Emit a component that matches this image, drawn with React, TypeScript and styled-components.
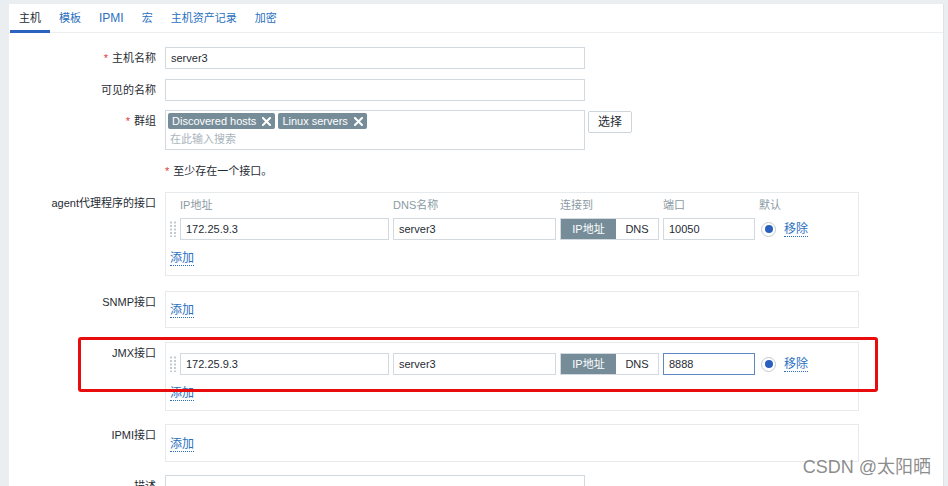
import React from 'react';
import styled, { createGlobalStyle } from 'styled-components';

const FONT = `"Liberation Sans", Arial, "Noto Sans CJK SC", sans-serif`;
const LINK = '#2a70bf';
const BORDER = '#d3dadf';

const GlobalStyle = createGlobalStyle`
  html, body { margin: 0; padding: 0; overflow: hidden; background: #ebeef0; }
  body { font-family: ${FONT}; font-size: 11px; color: #1f2c33; }
  * { box-sizing: border-box; }
`;

const Page = styled.div`
  padding: 4px 4px 0 9px;
  height: 486px;
`;

const Panel = styled.div`
  position: relative;
  background: #fff;
  height: 482px;
  overflow: hidden;
  border-right: 1px solid #dfe3e6;
`;

const TabBar = styled.nav`
  display: flex;
  height: 29px;
  padding-left: 1px;
  box-shadow: inset 0 -1px 0 #eceff1;
`;

const Tab = styled.div<{ $active?: boolean }>`
  padding: 0 9px;
  line-height: 28px;
  height: 29px;
  font-size: 11px;
  color: ${(p) => (p.$active ? '#1f2c33' : LINK)};
  box-shadow: ${(p) => (p.$active ? 'inset 0 -3px 0 #2d62bf' : 'none')};
  white-space: nowrap;
`;

const TabLatin = styled.span`
  font-size: 12px;
`;

const Form = styled.div`
  padding-top: 14px;
  display: flex;
  flex-direction: column;
`;

const Row = styled.div<{ $gap?: number }>`
  display: grid;
  grid-template-columns: 147px auto;
  column-gap: 9px;
  align-items: start;
  margin-bottom: ${(p) => p.$gap ?? 10}px;
`;

const Label = styled.div`
  text-align: right;
  line-height: 22px;
  white-space: nowrap;
`;

const Star = styled.span`
  color: #e03c3c;
  margin-right: 4px;
`;

const Field = styled.div`
  display: flex;
  align-items: flex-start;
  gap: 3px;
`;

const TextInput = styled.div<{ $w?: number; $focus?: boolean }>`
  width: ${(p) => p.$w ?? 420}px;
  height: 22px;
  border: 1px solid ${(p) => (p.$focus ? '#5c89bf' : BORDER)};
  padding: 0 5px;
  line-height: 20px;
  color: #1f2c33;
  background: #fff;
  white-space: nowrap;
  overflow: hidden;
`;

const TextArea = styled.div`
  width: 420px;
  height: 60px;
  border: 1px solid ${BORDER};
`;

const MultiSelect = styled.div`
  width: 420px;
  height: 40px;
  border: 1px solid ${BORDER};
  padding: 2px 2px;
  display: flex;
  flex-direction: column;
`;

const Chips = styled.div`
  display: flex;
  gap: 3px;
`;

const Chip = styled.span`
  display: inline-flex;
  align-items: center;
  gap: 6px;
  height: 16px;
  padding: 0 4px 0 4px;
  background: #768d99;
  color: #fff;
  border-radius: 2px;
  white-space: nowrap;
`;

const Placeholder = styled.div`
  padding-left: 2px;
  margin-top: 1px;
  line-height: 18px;
  color: #a9b5bc;
`;

const Button = styled.div`
  width: 44px;
  height: 22px;
  margin-top: 1px;
  border: 1px solid #cdd5da;
  border-radius: 2px;
  text-align: center;
  line-height: 20px;
  font-size: 12px;
  color: #1f2c33;
  background: #fff;
`;

const Hint = styled.div`
  line-height: 22px;
`;

const IfaceBox = styled.div<{ $pt?: number }>`
  width: 694px;
  border: 1px solid #e6eaec;
  padding: ${(p) => p.$pt ?? 5}px 4px 9px 4px;
`;

const IfaceGrid = styled.div`
  display: grid;
  grid-template-columns: 6px 209px 163px 99px 92px auto;
  column-gap: 4px;
  row-gap: 6px;
  align-items: center;
`;

const Head = styled.div`
  color: #8b9aa3;
  line-height: 14px;
`;

const Toggle = styled.div`
  display: flex;
  height: 22px;
  border: 1px solid ${BORDER};
`;

const ToggleOpt = styled.div<{ $on?: boolean; $w: number }>`
  width: ${(p) => p.$w}px;
  text-align: center;
  line-height: 20px;
  background: ${(p) => (p.$on ? '#768d99' : '#fff')};
  color: ${(p) => (p.$on ? '#fff' : '#1f2c33')};
`;

const DefaultCell = styled.div`
  display: flex;
  align-items: center;
  gap: 8px;
  padding-left: 2px;
`;

const Radio = styled.span`
  width: 15px;
  height: 15px;
  border-radius: 50%;
  border: 1px solid #c2cbd1;
  display: inline-flex;
  align-items: center;
  justify-content: center;
  &::after {
    content: '';
    width: 8px;
    height: 8px;
    border-radius: 50%;
    background: #2a5fbe;
  }
`;

const Link = styled.span`
  color: ${LINK};
  font-size: 12px;
  line-height: 14px;
  border-bottom: 1px dotted ${LINK};
  white-space: nowrap;
`;

const AddRow = styled.div<{ $mt?: number }>`
  margin-top: ${(p) => p.$mt ?? 0}px;
  display: flex;
`;

const Highlight = styled.div`
  position: absolute;
  left: 69px;
  top: 333px;
  width: 800px;
  height: 55px;
  border: 3px solid #e80c0c;
  border-radius: 3px;
  pointer-events: none;
`;

const Watermark = styled.div`
  position: absolute;
  right: 12px;
  bottom: 8px;
  font-family: ${FONT};
  font-size: 18px;
  line-height: 22px;
  color: rgba(110, 110, 110, 0.8);
  white-space: nowrap;
`;

const CloseIcon = () => (
  <svg width="9" height="9" viewBox="0 0 9 9">
    <path d="M1 1 L8 8 M8 1 L1 8" stroke="#fff" strokeWidth="2" strokeLinecap="square" />
  </svg>
);

const Handle = () => (
  <svg width="6" height="16" viewBox="0 0 6 16">
    {[0, 1, 2, 3, 4].map((r) =>
      [0, 1].map((c) => (
        <rect key={`${r}-${c}`} x={c * 4} y={r * 3.5 + 0.5} width="2" height="2" fill="#c3cbd1" />
      ))
    )}
  </svg>
);

type Iface = { ip: string; dns: string; port: string; focus?: boolean };

const IfaceRow: React.FC<Iface> = ({ ip, dns, port, focus }) => (
  <>
    <Handle />
    <TextInput $w={209}>{ip}</TextInput>
    <TextInput $w={163}>{dns}</TextInput>
    <Toggle>
      <ToggleOpt $on $w={55}>IP地址</ToggleOpt>
      <ToggleOpt $w={42}>DNS</ToggleOpt>
    </Toggle>
    <TextInput $w={92} $focus={focus}>{port}</TextInput>
    <DefaultCell>
      <Radio />
      <Link>移除</Link>
    </DefaultCell>
  </>
);

const tabs = ['主机', '模板', 'IPMI', '宏', '主机资产记录', '加密'];

export default function App() {
  return (
    <>
      <GlobalStyle />
      <Page>
        <Panel>
          <TabBar>
            {tabs.map((t, i) => (
              <Tab key={t} $active={i === 0}>
                {t === 'IPMI' ? <TabLatin>{t}</TabLatin> : t}
              </Tab>
            ))}
          </TabBar>
          <Form>
            <Row>
              <Label><Star>*</Star>主机名称</Label>
              <TextInput>server3</TextInput>
            </Row>
            <Row $gap={9}>
              <Label>可见的名称</Label>
              <TextInput />
            </Row>
            <Row>
              <Label><Star>*</Star>群组</Label>
              <Field>
                <MultiSelect>
                  <Chips>
                    <Chip>Discovered hosts <CloseIcon /></Chip>
                    <Chip>Linux servers <CloseIcon /></Chip>
                  </Chips>
                  <Placeholder>在此输入搜索</Placeholder>
                </MultiSelect>
                <Button>选择</Button>
              </Field>
            </Row>
            <Row>
              <Label />
              <Hint><Star>*</Star>至少存在一个接口。</Hint>
            </Row>
            <Row $gap={15}>
              <Label>agent代理程序的接口</Label>
              <IfaceBox>
                <IfaceGrid>
                  <span />
                  <Head>IP地址</Head>
                  <Head>DNS名称</Head>
                  <Head>连接到</Head>
                  <Head>端口</Head>
                  <Head>默认</Head>
                  <IfaceRow ip="172.25.9.3" dns="server3" port="10050" />
                </IfaceGrid>
                <AddRow $mt={11}><Link>添加</Link></AddRow>
              </IfaceBox>
            </Row>
            <Row $gap={14}>
              <Label>SNMP接口</Label>
              <IfaceBox $pt={11}>
                <AddRow><Link>添加</Link></AddRow>
              </IfaceBox>
            </Row>
            <Row $gap={13}>
              <Label>JMX接口</Label>
              <IfaceBox $pt={10}>
                <IfaceGrid>
                  <IfaceRow ip="172.25.9.3" dns="server3" port="8888" focus />
                </IfaceGrid>
                <AddRow $mt={11}><Link>添加</Link></AddRow>
              </IfaceBox>
            </Row>
            <Row $gap={13}>
              <Label>IPMI接口</Label>
              <IfaceBox $pt={12}>
                <AddRow><Link>添加</Link></AddRow>
              </IfaceBox>
            </Row>
            <Row>
              <Label>描述</Label>
              <TextArea />
            </Row>
          </Form>
          <Highlight />
          <Watermark>CSDN @太阳晒</Watermark>
        </Panel>
      </Page>
    </>
  );
}
